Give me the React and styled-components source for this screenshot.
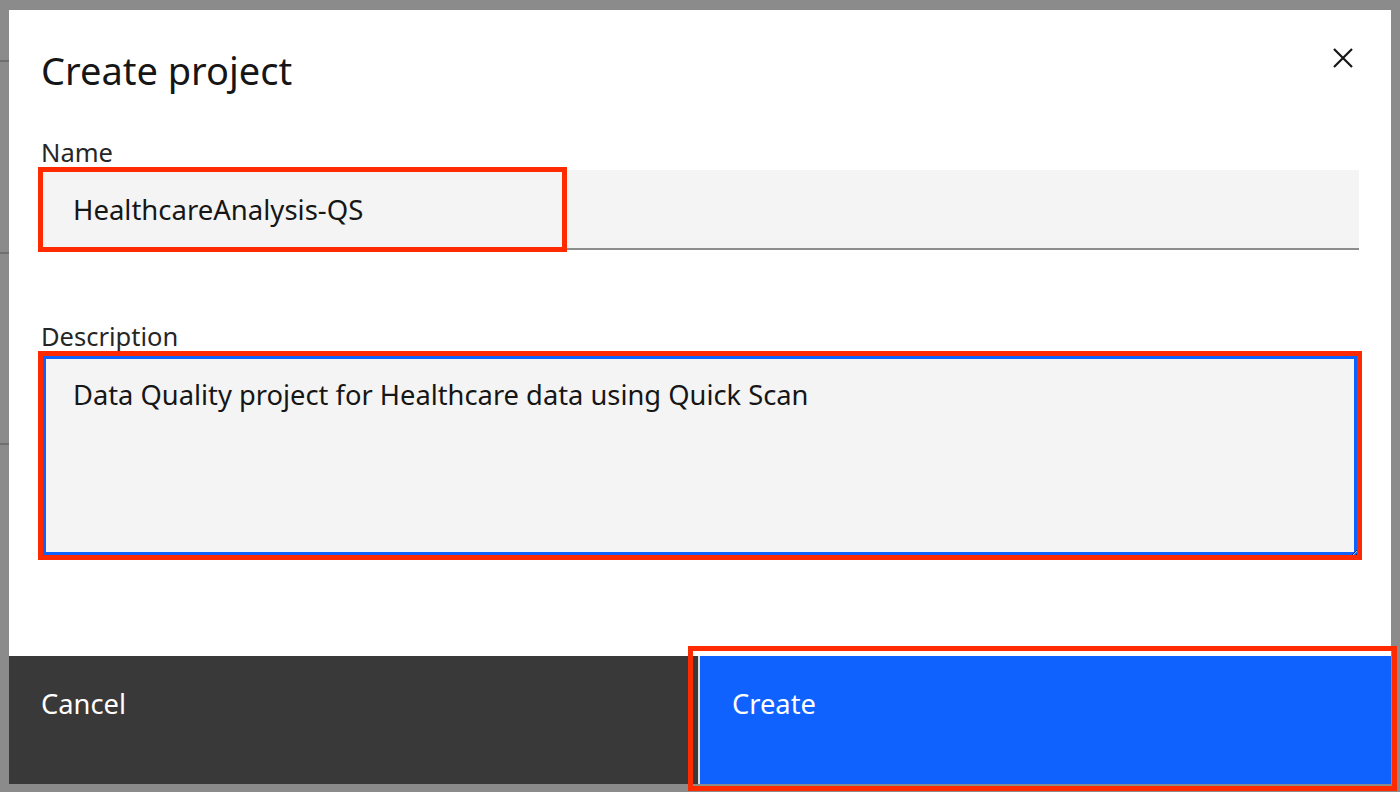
import React from "react";
import styled, { createGlobalStyle } from "styled-components";

const FONT = `"Noto Sans", "Open Sans", sans-serif`;

const GlobalStyle = createGlobalStyle`
  html, body { margin: 0; padding: 0; }
  body {
    background: #8b8b8b;
    font-family: ${FONT};
    -webkit-font-smoothing: antialiased;
  }
`;

const Backdrop = styled.div`
  width: 1400px;
  height: 792px;
  box-sizing: border-box;
  padding: 10px 9px 8px 9px;
  background-color: #8b8b8b;
  background-image:
    linear-gradient(#6f6f6f, #6f6f6f),
    linear-gradient(#6f6f6f, #6f6f6f),
    linear-gradient(#6f6f6f, #6f6f6f);
  background-size: 9px 2px, 9px 2px, 9px 2px;
  background-position: 0 60px, 0 252px, 0 443px;
  background-repeat: no-repeat;
`;

const Modal = styled.div`
  position: relative;
  width: 1382px;
  height: 774px;
  background: #ffffff;
  display: flex;
  flex-direction: column;
`;

const Header = styled.header`
  padding: 32px 32px 0 32px;
`;

const Title = styled.h2`
  margin: 0;
  font-family: ${FONT};
  font-weight: 400;
  font-size: 38px;
  line-height: 56px;
  color: #161616;
`;

const CloseButton = styled.button`
  position: absolute;
  top: 0;
  right: 0;
  width: 96px;
  height: 96px;
  border: 0;
  padding: 0;
  background: transparent;
  display: flex;
  align-items: center;
  justify-content: center;
  cursor: pointer;
`;

const Body = styled.div`
  flex: 1;
  padding: 38px 32px 0 32px;
  display: flex;
  flex-direction: column;
`;

const FormItem = styled.div`
  display: flex;
  flex-direction: column;
  margin-bottom: ${(p) => p.$gap || 0}px;
`;

const Label = styled.label`
  font-family: ${FONT};
  font-size: 25.5px;
  line-height: 32px;
  color: #262626;
  margin-bottom: 2px;
`;

const FieldWrap = styled.div`
  position: relative;
`;

const Annotation = styled.div`
  position: absolute;
  pointer-events: none;
  box-sizing: border-box;
  border: 5px solid #ff2a00;
  z-index: 2;
`;

const TextInput = styled.input`
  display: block;
  box-sizing: border-box;
  width: 100%;
  height: 80px;
  margin: 0;
  padding: 0 32px;
  border: 0;
  border-bottom: 2px solid #8d8d8d;
  background: #f4f4f4;
  font-family: ${FONT};
  font-size: 27.5px;
  color: #161616;
  outline: none;
`;

const TextArea = styled.textarea`
  display: block;
  box-sizing: border-box;
  width: 100%;
  height: 203px;
  margin: 0;
  padding: 21px 32px;
  border: 0;
  background: #f4f4f4;
  box-shadow: inset 0 0 0 5px #0f62fe;
  font-family: ${FONT};
  font-size: 27.3px;
  line-height: 40px;
  color: #161616;
  outline: none;
  resize: vertical;
`;

const Footer = styled.footer`
  position: relative;
  height: 128px;
  display: grid;
  grid-template-columns: 1fr 1fr;
`;

const FooterButton = styled.button`
  position: relative;
  border: 0;
  margin: 0;
  padding: 30px 32px 0 32px;
  text-align: left;
  display: flex;
  align-items: flex-start;
  font-family: ${FONT};
  font-size: 27.3px;
  line-height: 36px;
  color: #ffffff;
  background: ${(p) => (p.$kind === "primary" ? "#0f62fe" : "#393939")};
  box-shadow: ${(p) => (p.$kind === "primary" ? "-2px 0 0 0 #e0e0e0" : "none")};
  cursor: pointer;
`;

export default function App() {
  return (
    <>
      <GlobalStyle />
      <Backdrop>
        <Modal>
          <Header>
            <Title>Create project</Title>
          </Header>
          <CloseButton aria-label="Close">
            <svg width="22" height="22" viewBox="0 0 22 22" fill="none">
              <path d="M2 2 L20 20 M20 2 L2 20" stroke="#161616" strokeWidth="2.2" />
            </svg>
          </CloseButton>
          <Body>
            <FormItem $gap={70}>
              <Label>Name</Label>
              <FieldWrap>
                <TextInput readOnly value="HealthcareAnalysis-QS" />
                <Annotation style={{ left: -3, top: -3, width: 529, height: 85 }} />
              </FieldWrap>
            </FormItem>
            <FormItem>
              <Label>Description</Label>
              <FieldWrap>
                <TextArea readOnly value="Data Quality project for Healthcare data using Quick Scan" />
                <Annotation style={{ left: -3, top: -3, right: -3, bottom: -3 }} />
              </FieldWrap>
            </FormItem>
          </Body>
          <Footer>
            <FooterButton $kind="secondary">Cancel</FooterButton>
            <FooterButton $kind="primary">Create</FooterButton>
            <Annotation style={{ left: 679, top: -10, right: -6, bottom: -7 }} />
          </Footer>
        </Modal>
      </Backdrop>
    </>
  );
}
